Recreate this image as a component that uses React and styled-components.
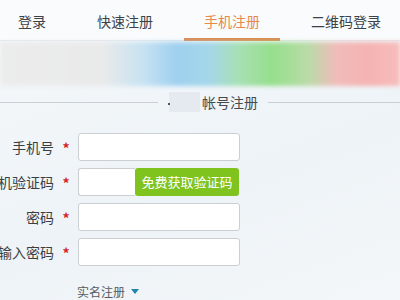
import styled, { createGlobalStyle } from 'styled-components';

const GlobalStyle = createGlobalStyle`
  html, body {
    margin: 0;
    padding: 0;
  }
  body {
    width: 400px;
    height: 300px;
    overflow: hidden;
    background: linear-gradient(160deg, #f4f8fb 0%, #eef3f7 60%, #f3f7fa 100%);
    font-family: "Noto Sans CJK SC", "Noto Sans", sans-serif;
  }
`;

const Page = styled.div`
  width: 400px;
  height: 300px;
  overflow: hidden;
`;

const TabBar = styled.div`
  height: 41px;
  background: #f9fbfc;
  border-bottom: 1px solid #e3e8ec;
  display: flex;
  gap: 11px;
  margin-left: -2px;
  box-sizing: border-box;
`;

const Tab = styled.div`
  padding: 1px 20px 0;
  height: 41px;
  box-sizing: border-box;
  line-height: 40px;
  font-size: 14px;
  white-space: nowrap;
  color: ${p => (p.$active ? '#e8884c' : '#3c4248')};
  border-bottom: 3px solid ${p => (p.$active ? '#dd8b52' : 'transparent')};
  margin-bottom: -1px;
`;

const Banner = styled.div`
  height: 44px;
  margin-top: 1px;
  background: linear-gradient(
    90deg,
    #ececec 0%,
    #e9eaea 26%,
    #c6e2f2 36%,
    #9fd1ef 44%,
    #a4d6ea 52%,
    #a6e0b2 60%,
    #96df8c 68%,
    #b9dba8 77%,
    #f0bcba 84%,
    #f5b3b3 92%,
    #f7bcbc 100%
  );
  filter: blur(2px);
`;

const Divider = styled.div`
  display: grid;
  grid-template-columns: 158px auto 1fr;
  align-items: center;
  margin-top: 6px;
  height: 20px;
`;

const Line = styled.div`
  height: 1px;
  background: #c9cfd4;
`;

const Caption = styled.div`
  display: flex;
  align-items: center;
  padding: 0 10px 0 11px;
  font-size: 14px;
  color: #444a50;
  white-space: nowrap;
`;

const Masked = styled.span`
  display: inline-block;
  position: relative;
  width: 31px;
  height: 20px;
  margin-right: 2px;
  background: #e4eaef;

  &::before {
    content: '';
    position: absolute;
    left: -1px;
    top: 11px;
    width: 2px;
    height: 2px;
    background: #555;
  }
`;

const Form = styled.div`
  margin-top: 21px;
  display: flex;
  flex-direction: column;
  gap: 8px;
`;

const Row = styled.div`
  display: flex;
  align-items: center;
  height: 27px;
`;

const Label = styled.div`
  width: 54px;
  display: flex;
  justify-content: flex-end;
  white-space: nowrap;
  font-size: 14px;
  color: #3a3f44;
`;

const Star = styled.span`
  width: 24px;
  text-align: center;
  color: #d4242a;
  font-size: 14px;
  font-weight: bold;
  padding-top: 3px;
`;

const Input = styled.input`
  box-sizing: border-box;
  width: ${p => p.$width || 162}px;
  height: 28px;
  border: 1px solid #cbcfd2;
  border-radius: 3px;
  background: #fff;
  outline: none;
  padding: 0 6px;
  ${p => p.$joined && 'border-right: none; border-top-right-radius: 0; border-bottom-right-radius: 0;'}
`;

const CodeButton = styled.button`
  box-sizing: border-box;
  width: 104px;
  height: 28px;
  border: none;
  border-radius: 3px;
  background: #7fc31f;
  color: #fff;
  font-family: inherit;
  font-size: 13px;
  padding: 0;
  cursor: pointer;
`;

const More = styled.div`
  margin: 18px 0 0 77px;
  display: flex;
  align-items: center;
  gap: 6px;
  font-size: 12px;
  color: #555b60;
`;

const Caret = styled.span`
  width: 0;
  height: 0;
  border-left: 4px solid transparent;
  border-right: 4px solid transparent;
  border-top: 5px solid #1f86a6;
`;

const tabs = ['登录', '快速注册', '手机注册', '二维码登录'];

export default function App() {
  return (
    <Page>
      <GlobalStyle />
      <TabBar>
        {tabs.map(t => (
          <Tab key={t} $active={t === '手机注册'}>{t}</Tab>
        ))}
      </TabBar>
      <Banner />
      <Divider>
        <Line />
        <Caption>
          <Masked />
          帐号注册
        </Caption>
        <Line />
      </Divider>
      <Form>
        <Row>
          <Label>手机号</Label>
          <Star>*</Star>
          <Input />
        </Row>
        <Row>
          <Label>手机验证码</Label>
          <Star>*</Star>
          <Input $width={57} $joined />
          <CodeButton>免费获取验证码</CodeButton>
        </Row>
        <Row>
          <Label>密码</Label>
          <Star>*</Star>
          <Input type="password" />
        </Row>
        <Row>
          <Label>确认输入密码</Label>
          <Star>*</Star>
          <Input type="password" />
        </Row>
      </Form>
      <More>
        实名注册
        <Caret />
      </More>
    </Page>
  );
}
